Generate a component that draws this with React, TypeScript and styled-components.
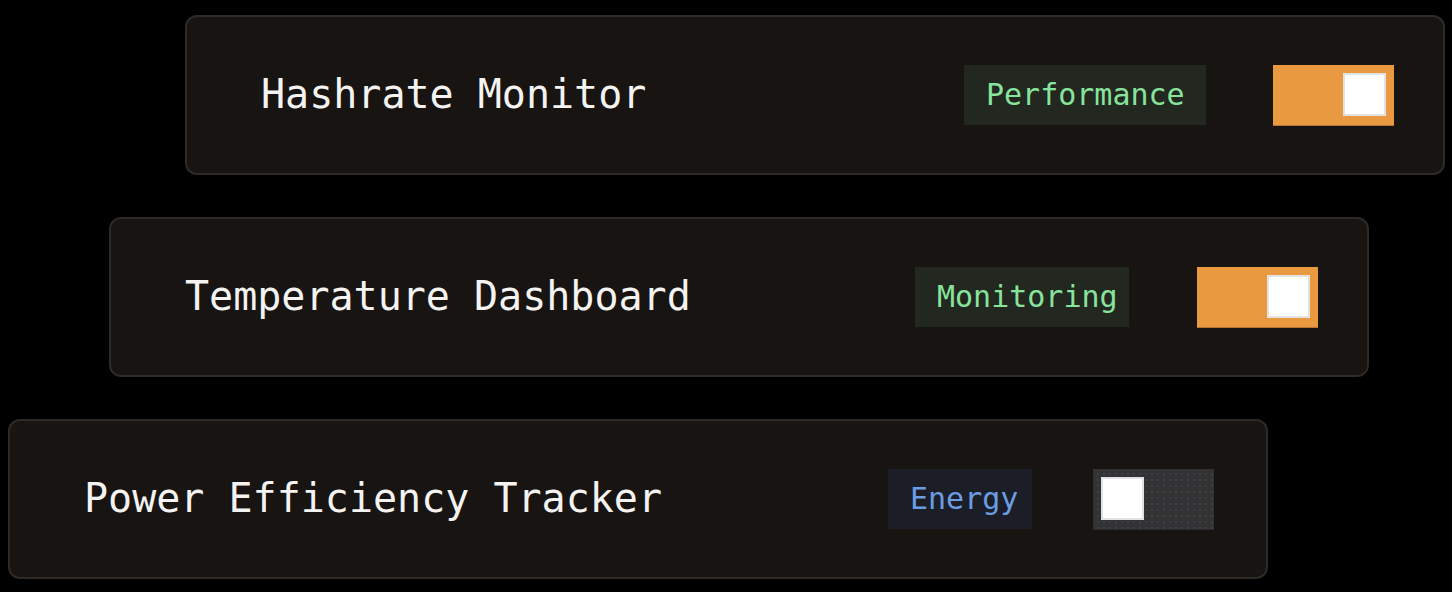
import React from "react";
import styled, { createGlobalStyle } from "styled-components";

const Global = createGlobalStyle`
  html, body {
    margin: 0;
    padding: 0;
    background: #000000;
  }
  body {
    padding: 8px;
    font-family: "DejaVu Sans Mono", "Liberation Mono", monospace;
  }
`;

const Stack = styled.div`
  display: flex;
  flex-direction: column;
  gap: 42px;
  padding-top: 7px;
`;

const Card = styled.div<{ $offset: number; $pr: number }>`
  box-sizing: border-box;
  display: flex;
  align-items: center;
  width: 1260px;
  height: 160px;
  margin-left: ${(p) => p.$offset}px;
  padding: 0 ${(p) => p.$pr}px 0 74px;
  background: #171411;
  border: 2px solid #2d2a27;
  border-radius: 12px;
`;

const Title = styled.h2`
  flex: 1;
  margin: 0 0 2px;
  font-family: "DejaVu Sans Mono", "Liberation Mono", monospace;
  font-size: 40px;
  font-weight: 400;
  line-height: 1;
  color: #f4f3f1;
  white-space: pre;
`;

type Tone = "green" | "blue";

const toneBg: Record<Tone, string> = { green: "#22271f", blue: "#1b1e26" };
const toneFg: Record<Tone, string> = { green: "#88e39c", blue: "#6c9de3" };

const Badge = styled.span<{ $tone: Tone; $w: number; $gap: number }>`
  box-sizing: border-box;
  display: flex;
  align-items: center;
  width: ${(p) => p.$w}px;
  height: 60px;
  padding-left: 22px;
  margin-right: ${(p) => p.$gap}px;
  background: ${(p) => toneBg[p.$tone]};
  color: ${(p) => toneFg[p.$tone]};
  font-size: 30px;
  line-height: 1;
  white-space: pre;
`;

const Toggle = styled.button<{ $on: boolean }>`
  box-sizing: border-box;
  display: flex;
  align-items: center;
  justify-content: ${(p) => (p.$on ? "flex-end" : "flex-start")};
  width: 121px;
  height: 61px;
  padding: 0 8px;
  border: none;
  border-bottom: 1px solid ${(p) => (p.$on ? "#b87430" : "#2c2c2c")};
  cursor: pointer;
  background-color: ${(p) => (p.$on ? "#e99a41" : "#333333")};
  background-image: ${(p) =>
    p.$on
      ? "none"
      : "radial-gradient(circle at center, #3c3f4b 0.8px, transparent 1.2px)"};
  background-size: 6px 6px;
  background-position: 2px 2px;
`;

const Knob = styled.span`
  box-sizing: border-box;
  display: block;
  width: 43px;
  height: 43px;
  background: #ffffff;
  border: 2px solid #e2e2e4;
`;

type Item = {
  title: string;
  tag: string;
  tone: Tone;
  tagWidth: number;
  gap: number;
  pr: number;
  on: boolean;
  offset: number;
};

const items: Item[] = [
  { title: "Hashrate Monitor", tag: "Performance", tone: "green", tagWidth: 242, gap: 67, pr: 49, on: true, offset: 177 },
  { title: "Temperature Dashboard", tag: "Monitoring", tone: "green", tagWidth: 214, gap: 68, pr: 49, on: true, offset: 101 },
  { title: "Power Efficiency Tracker", tag: "Energy", tone: "blue", tagWidth: 144, gap: 61, pr: 52, on: false, offset: 0 },
];

export default function App() {
  return (
    <>
      <Global />
      <Stack>
        {items.map((it) => (
          <Card key={it.title} $offset={it.offset} $pr={it.pr}>
            <Title>{it.title}</Title>
            <Badge $tone={it.tone} $w={it.tagWidth} $gap={it.gap}>
              {it.tag}
            </Badge>
            <Toggle $on={it.on} aria-pressed={it.on}>
              <Knob />
            </Toggle>
          </Card>
        ))}
      </Stack>
    </>
  );
}
